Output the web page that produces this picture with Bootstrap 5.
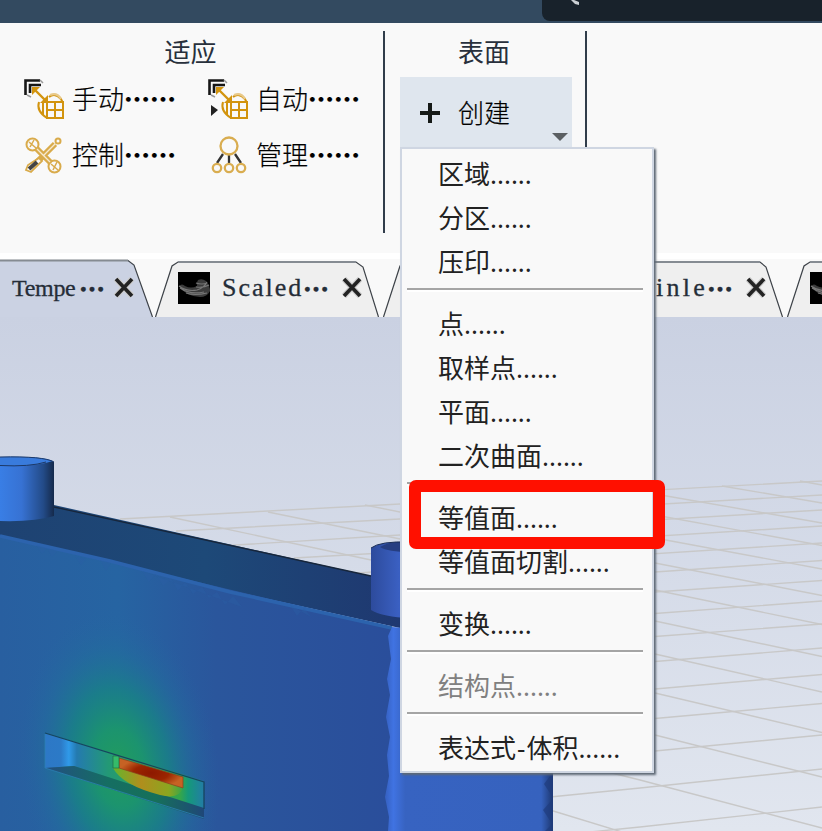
<!DOCTYPE html>
<html lang="zh-CN">
<head>
<meta charset="utf-8">
<meta name="viewport" content="width=device-width, initial-scale=1">
<title>表面</title>
<link href="https://cdn.jsdelivr.net/npm/bootstrap@5.3.0/dist/css/bootstrap.min.css" rel="stylesheet">
<style>
body{width:822px;height:831px;overflow:hidden;background:#f9f9f9;font-family:"Noto Sans","Noto Sans CJK SC",sans-serif;font-size:26px;line-height:44px;color:#222}
.app-top{height:23px;background:#334a60}
.search-tab{width:280px;height:21px;background:#18222b;border-bottom-left-radius:8px}
.ribbon{height:230px;background:#f9f9f9;font-family:"Noto Sans CJK SC",sans-serif;font-weight:300}
.group-adapt{width:383px}
.group-surface{width:200px}
.rule{width:2px;height:202px;background:#313d4b;margin-top:8px}
.group-title{line-height:36px;height:37px;margin-top:10px;padding-right:2px;text-align:center;color:#28303c;font-weight:400}
.cmd{height:56px;color:#000;white-space:nowrap;-webkit-text-stroke:.2px #000}
.cmd svg{flex:none}
.cmd .label{margin-left:-1px}
.cmd-right svg{margin-left:32px}
.cmd b,.dots{font-weight:900}
.create{width:172px;height:71px;margin:7px 0 0 15px;background:#dfe6ee;border:0;border-radius:0;color:#000;padding:0 0 0 20px}
.create .label{font-size:26px;font-weight:300;margin-left:18px;padding-bottom:2px;-webkit-text-stroke:.2px #000}
.create .caret{right:4px;bottom:7px;width:0;height:0;border:8px solid transparent;border-top-color:#5b5f62;border-bottom:0}
.tabs{height:64px;background:#f9f9f9;border-top:6px solid #fff;font-family:"Liberation Serif","Noto Sans CJK SC",serif;font-size:26px;line-height:58px;color:#252d38}
.tab-item{height:58px;white-space:nowrap}
.tab-item svg{flex:none}
.tab-item span{-webkit-text-stroke:.3px #252d38}
.name1{font-size:24px;letter-spacing:-.3px}.name2{letter-spacing:2px}.name3{letter-spacing:3.3px}
.tab-item .dots{letter-spacing:0;font-family:"Noto Sans CJK SC",sans-serif;padding-bottom:1px}
.viewport{height:514px;background:linear-gradient(#cad1e2,#e1e6ef)}
.surface-menu{left:400px;top:147px;width:254px;height:626px;background:#f9f9f9;border:2px solid #cfd6e2;border-radius:0;padding:3px 0 0;box-shadow:2px 2px 2px #5e6875}
.surface-menu .dropdown-item{height:44px;padding:0 0 0 36px;line-height:44px;color:#222;font-size:26px}
.surface-menu .dropdown-item.disabled{color:#808080}
.dash{letter-spacing:1px;margin-left:1px}
.sep{height:18px;padding:4px 9px 0 5px}
.sep div{height:4px;background:linear-gradient(#a5a5a5 50%,#fff 50%)}
.callout{left:409px;top:480px;width:256px;height:69px;border:12px solid #ff1000;border-radius:7px;z-index:1100}
</style>
<script src="https://cdn.jsdelivr.net/npm/bootstrap@5.3.0/dist/js/bootstrap.bundle.min.js"></script>
</head>
<body class="position-relative">
<svg width="0" height="0" class="position-absolute">
<defs>
<g id="mesh"><path d="M1.500 17V2.500H16M6 15V7H17" fill="none" stroke="#171717" stroke-width="2.600"/><path d="M3 17l4 2M16 2l3 3" stroke="#999" stroke-width="1.500"/>
<path d="M8 9h8l-8 8zM24 25h-8l8-8z" fill="#d2940f"/><path d="M10 11l13 13" stroke="#d2940f" stroke-width="2.400"/>
<path d="M23 24h16v16H23zM23 32h16M31 24v16M25 19q6-5 12 2l2 4M15 24q-3 9 8 16M19 25v12" fill="none" stroke="#d2940f" stroke-width="2"/><path d="M26 17q7-3 11 4" fill="none" stroke="#e8c98a" stroke-width="2"/></g>
<g id="close"><path d="M3 2l16 17M19 2L3 19" stroke="#ccc" stroke-width="6"/><path d="M3 2l16 17M19 2L3 19" stroke="#222" stroke-width="3.600"/></g>
<g id="thumb"><path d="M0 0h32v32H0z" fill="#000"/><path d="M1 14q3-3 6 0q6 3 12 0q-1-3 1-6q4-2 8 1q4 5 4 10q-3 6-10 6q-15-1-21-11z" fill="#3c3c3c"/><path d="M1 14q8 6 18 4q7-2 10-8M2 16q10 7 24 4M8 21q9 3 21 0M18 11q6 2 11 0M18 15q8 1 13-2" fill="none" stroke="#777" stroke-width="1.200"/></g>
</defs></svg>
<header class="app-top d-flex justify-content-end"><div class="search-tab"><svg class="d-block" width="60" height="6"><path d="M29 0l3 0 5 2v3l-4-1z" fill="#cbd0d4"/></svg></div></header>
<section class="ribbon d-flex align-items-start">
 <div class="group-adapt">
  <div class="group-title">适应</div>
  <div class="d-flex">
   <div>
    <div class="cmd d-flex align-items-center"><svg class="ms-4 me-2" width="41" height="41"><use href="#mesh"/></svg><span class="label">手动<b>……</b></span></div>
    <div class="cmd d-flex align-items-center"><svg class="ms-4 me-2" width="41" height="41" fill="none" stroke="#d9ab4b"><g stroke-width="2"><circle cx="8.500" cy="10.500" r="6"/><circle cx="30.500" cy="32.500" r="6"/></g><g stroke-width="1.500"><path d="M5 8l7 6M10 6l-4 7M27 30l7 6M33 28l-4 8"/></g><path d="M12 14l15 15M31 10L7 34" stroke-width="6"/><path d="M13 15l13 13M31 10L20 21" stroke="#f6ead2" stroke-width="1.400"/><circle cx="34" cy="7" r="2.500" stroke-width="2"/><path d="M15 24l3 3L7 38l-5-2 2-5z" fill="#f9f9f9" stroke-width="1.800"/><path d="M5 35l8-7" stroke="#444" stroke-width="4"/></svg><span class="label">控制<b>……</b></span></div>
   </div>
   <div class="cmd-right">
    <div class="cmd d-flex align-items-center"><svg class="me-2" width="41" height="41"><use href="#mesh"/><path d="M3 27l7 5-7 6z" fill="#222"/></svg><span class="label">自动<b>……</b></span></div>
    <div class="cmd d-flex align-items-center"><svg class="me-2" width="41" height="41" fill="none" stroke="#d9ad50" stroke-width="2.300"><path d="M15 20L9 29M21 20v9M27 20l6 9" stroke="#333"/><circle cx="21" cy="12" r="8.500"/><circle cx="9" cy="34" r="4.200"/><circle cx="21" cy="34" r="4.200"/><circle cx="33" cy="34" r="4.200"/></svg><span class="label">管理<b>……</b></span></div>
   </div>
  </div>
 </div>
 <div class="rule"></div>
 <div class="group-surface">
  <div class="group-title">表面</div>
  <button class="create btn d-flex align-items-center position-relative"><svg width="20" height="20"><path d="M10 0v20M0 10h20" stroke="#161a17" stroke-width="4"/></svg><span class="label">创建</span><span class="caret position-absolute"></span></button>
 </div>
 <div class="rule"></div>
</section>
<nav class="tabs position-relative">
 <svg class="position-absolute top-0 start-0" width="822" height="58" viewBox="0 259 822 58" stroke="#3d4248" stroke-width="1.200">
 <path d="M-2 317V260.500H128L134 265L152.500 317" fill="#cbd2e3"/><g fill="#efefef"><path d="M155.500 317L172 266L178 262H356L363 267L378.500 317"/><path d="M383.500 317L400 266L406 262H760L766 267L782.500 317"/><path d="M787.500 317L804 266L810 262H830V317"/></g><path d="M0 260.500H128M178 262H356M600 262H760M810 262H822" stroke="#858b92" stroke-width="2"/></svg>
 <div class="d-flex position-relative">
  <div class="tab-item d-flex align-items-center" style="width:178px;padding-left:12px"><span class="name1" style="width:67px">Tempe</span><span class="dots">…</span><svg style="margin-left:8px" width="22" height="22"><use href="#close"/></svg></div>
  <div class="tab-item d-flex align-items-center" style="width:478px"><svg width="32" height="32"><use href="#thumb"/></svg><span class="name2" style="margin-left:12px;width:81px">Scaled</span><span class="dots">…</span><svg style="margin-left:12px" width="22" height="22"><use href="#close"/></svg></div>
  <div class="tab-item d-flex align-items-center" style="width:154px"><span class="name3" style="width:51px">inle</span><span class="dots">…</span><svg style="margin-left:12px" width="22" height="22"><use href="#close"/></svg></div>
  <div class="tab-item d-flex align-items-center overflow-hidden" style="width:12px"><svg width="32" height="32"><use href="#thumb"/></svg></div>
 </div>
</nav>
<main class="viewport">
<svg class="d-block" width="822" height="514" viewBox="0 317 822 514">
<defs>
<linearGradient id="face"><stop offset="0" stop-color="#285fa0"/><stop offset=".3" stop-color="#2664a2"/><stop offset=".55" stop-color="#2a569c"/><stop offset="1" stop-color="#2a4e9b"/></linearGradient>
<linearGradient id="roof"><stop offset="0" stop-color="#1e4272"/><stop offset=".5" stop-color="#1d4978"/><stop offset="1" stop-color="#1f3770"/></linearGradient>
<linearGradient id="cyl"><stop offset="0" stop-color="#397ee5"/><stop offset=".4" stop-color="#3772d3"/><stop offset=".8" stop-color="#234b88"/><stop offset="1" stop-color="#152a4b"/></linearGradient>
<linearGradient id="cyl2"><stop offset="0" stop-color="#2d4b9c"/><stop offset="1" stop-color="#4068d1"/></linearGradient>
<linearGradient id="side"><stop offset="0" stop-color="#3560c0"/><stop offset=".05" stop-color="#4073e2"/><stop offset=".12" stop-color="#3763c1"/><stop offset=".93" stop-color="#3662be"/><stop offset="1" stop-color="#1d3770"/></linearGradient>
<radialGradient id="heat" gradientUnits="userSpaceOnUse" cx="0" cy="0" r="1" gradientTransform="translate(119 768) rotate(-8) scale(100 160)"><stop offset="0" stop-color="#229c5c"/><stop offset=".25" stop-color="#1b966c" stop-opacity=".95"/><stop offset=".5" stop-color="#178583" stop-opacity=".75"/><stop offset=".75" stop-color="#1f7399" stop-opacity=".35"/><stop offset="1" stop-color="#2664a2" stop-opacity="0"/></radialGradient>
<linearGradient id="slot"><stop offset="0" stop-color="#2d78c6"/><stop offset=".1" stop-color="#2c7ac7"/><stop offset=".15" stop-color="#309ae9"/><stop offset=".2" stop-color="#247aaf"/><stop offset=".4" stop-color="#239975"/><stop offset=".85" stop-color="#35a64a"/><stop offset=".9" stop-color="#159979"/><stop offset="1" stop-color="#237ca6"/></linearGradient>
<linearGradient id="floor"><stop offset="0" stop-color="#234e82"/><stop offset=".4" stop-color="#156e62"/><stop offset=".7" stop-color="#16705a"/><stop offset="1" stop-color="#1f4778"/></linearGradient>
<radialGradient id="hot"><stop offset="0" stop-color="#8d1900"/><stop offset=".55" stop-color="#9b2500"/><stop offset="1" stop-color="#c66224"/></radialGradient>
<linearGradient id="glow"><stop offset="0" stop-color="#65b52d"/><stop offset=".4" stop-color="#b08e1d"/><stop offset=".8" stop-color="#8ba620"/><stop offset="1" stop-color="#35a64a"/></linearGradient>
</defs>
<g fill="none" stroke="#c8c8c8" stroke-width="1.400">
<path d="M120 519L400 504L822 481M176 531L400 519L822 495M220 546L400 535L822 510M294 558L400 552L822 526M345 574L400 570L822 543M655 572L822 560.500M655 592L822 580.500M655 613.500L822 601M655 636.500L822 624M655 661.500L822 648M655 689L822 674.500M655 718.500L822 703.500M655 751L822 735M550 797L640 788L822 769M550 836L640 827L822 807"/>
<path d="M170 517L371 560M268 512L410 541M365 505L410 514M800 481L822 485M722 486L822 503M655 494L822 523M655 515L822 545.500M655 538L822 569M655 563L822 595.500M655 590L822 624.500M655 621L822 656.500M655 654L822 692M655 693L822 732.500M655 735L822 777M600 770L640 780L822 828M550 810L622 832"/>
</g>
<path d="M0 505H54L371 576L410 625L400 628L0 540z" fill="url(#roof)"/><path d="M54 507L371 576" stroke="#17263b" stroke-width="1.300"/>
<path d="M0 535L392 628V831H0z" fill="url(#face)"/><path d="M0 535L392 628V831H0z" fill="url(#heat)"/>
<path d="M0 536L110 561L230 592L392 628" stroke="#2c63ad" stroke-width="3.500" fill="none"/>
<path d="M36 545l6 9 5-6 5 9 5-6M75 556l6 9 5-6M100 560l6 11 5-8M142 571l7 11 7-8 7 12 8-8 7 13 7-9 8 12 9-7 7 11 8-6 8 13 8-9 9 11M290 605l7 11 7-8 7 9" fill="#2a60a6" fill-opacity=".4"/>
<path d="M392 627L553 640V831H388l1-14-4-20 4-21-2-21 3-18-4-20 4-22-3-16 4-20-3-23z" fill="url(#side)"/>
<path d="M553 772l-9 12 8 12v4l-9 10 8 12v3l-6 6h8z" fill="#1f3c7d" fill-opacity=".7"/>
<path d="M0 457Q44 456 54 462V516Q35 522 0 521z" fill="url(#cyl)"/><path d="M0 457Q42 456 53 461Q35 467 0 465z" fill="#397bdc"/><path d="M0 457Q44 456 54 462M0 465.500Q30 467 46 462" fill="none" stroke="#1d3967"/>
<path d="M371 548Q380 541 410 542V618Q383 617 371 610z" fill="url(#cyl2)"/><path d="M380 547Q389 541 410 542V552Q388 552 380 547z" fill="#263e81"/><path d="M371 548Q380 541 410 542" fill="none" stroke="#1a2d55"/>
<path d="M45 733L204 781V809L74 766L45 768z" fill="url(#slot)"/>
<path d="M45 768L74 766L204 808V819z" fill="url(#floor)"/>
<path d="M113 757L183 779V787Q180 800 160 795Q122 785 113 768z" fill="url(#glow)"/>
<path d="M119 758L183 777V788L119 768z" fill="url(#hot)" stroke="#883d1c" stroke-width=".7"/><path d="M113 756h6v12h-6z" fill="#35bb69" stroke="#216e45" stroke-width=".7"/>
<path d="M45 733L204 782V809" stroke="#16465e" stroke-width="1.300" fill="none"/><path d="M45 734V768L204 818" stroke="#2b80b4" stroke-width=".8" fill="none"/>
</svg>
</main>
<div class="surface-menu dropdown-menu show position-absolute">
<a class="dropdown-item">区域......</a><a class="dropdown-item">分区......</a><a class="dropdown-item">压印......</a><div class="sep"><div></div></div>
<a class="dropdown-item">点......</a><a class="dropdown-item">取样点......</a><a class="dropdown-item">平面......</a><a class="dropdown-item">二次曲面......</a><div class="sep"><div></div></div>
<a class="dropdown-item">等值面......</a><a class="dropdown-item">等值面切割......</a><div class="sep"><div></div></div>
<a class="dropdown-item">变换......</a><div class="sep"><div></div></div>
<a class="dropdown-item disabled">结构点......</a><div class="sep"><div></div></div>
<a class="dropdown-item">表达式<span class="dash">-</span>体积......</a>
</div>
<div class="callout position-absolute"></div>
</body>
</html>
